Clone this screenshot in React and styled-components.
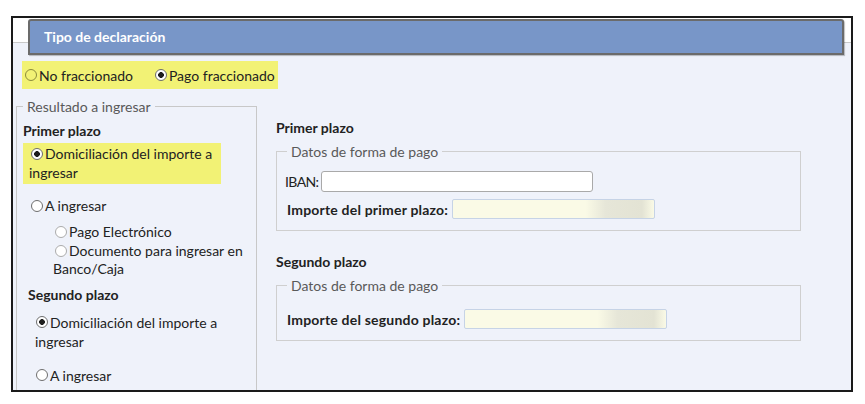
import React from "react";
import styled, { createGlobalStyle } from "styled-components";

const GlobalStyle = createGlobalStyle`
  html, body {
    margin: 0;
    padding: 0;
    background: #ffffff;
  }
  body {
    font-family: "Source Sans Pro", Lato, "Noto Sans", sans-serif;
    font-size: 14px;
    color: #222;
  }
`;

function Radio({ checked, muted, yellow }) {
  return <Dot checked={checked} muted={muted} yellow={yellow} />;
}

function App() {
  return (
    <>
      <GlobalStyle />
      <Frame>
        <Header>Tipo de declaración</Header>

        <ModeBar>
          <Option>
            <Radio yellow />
            No fraccionado
          </Option>
          <Option gap={22}>
            <Radio checked />
            Pago fraccionado
          </Option>
        </ModeBar>

        <Body>
          <LeftSet>
            <Legend indent={6}>Resultado a ingresar</Legend>
            <Title indent={6}>Primer plazo</Title>
            <Highlight>
              <Line indent={8}>
                <Radio checked />
                Domiciliación del importe a
              </Line>
              <Line indent={6}>ingresar</Line>
            </Highlight>
            <Line indent={14} top={12}>
              <Radio />A ingresar
            </Line>
            <SubOptions>
              <Line indent={2}>
                <Radio muted />
                Pago Electrónico
              </Line>
              <Line indent={2}>
                <Radio muted />
                Documento para ingresar en
              </Line>
              <Line>Banco/Caja</Line>
            </SubOptions>
            <Title indent={11} top={6}>
              Segundo plazo
            </Title>
            <Line indent={19} top={9}>
              <Radio checked />
              Domiciliación del importe a
            </Line>
            <Line indent={18}>ingresar</Line>
            <Line indent={19} top={15}>
              <Radio />A ingresar
            </Line>
          </LeftSet>

          <RightCol>
            <Title>Primer plazo</Title>
            <DataSet>
              <Legend indent={2}>Datos de forma de pago</Legend>
              <Row top={10}>
                <Label tight>IBAN:</Label>
                <TextInput width={272} />
              </Row>
              <Row top={7} indent={2}>
                <Label bold>Importe del primer plazo:</Label>
                <AmountInput />
              </Row>
            </DataSet>

            <Title top={21}>Segundo plazo</Title>
            <DataSet>
              <Legend indent={2}>Datos de forma de pago</Legend>
              <Row top={14} indent={2}>
                <Label bold>Importe del segundo plazo:</Label>
                <AmountInput />
              </Row>
            </DataSet>
          </RightCol>
        </Body>
      </Frame>
    </>
  );
}

const Frame = styled.div`
  margin: 16px 0 0 11px;
  width: 838px;
  height: 372px;
  border: 2px solid #1a1a1a;
  overflow: hidden;
  background: linear-gradient(
    to bottom,
    #ffffff 0 24px,
    #c9c9c9 24px 25px,
    #eff2fa 25px
  );
`;

const Header = styled.div`
  margin: 1px 7px 0 15px;
  height: 31px;
  display: flex;
  align-items: center;
  padding-left: 14px;
  background: #7896c8;
  border: 2px solid #6b6b6b;
  border-radius: 3px 3px 0 0;
  box-shadow: 1px 1px 1px rgba(0, 0, 0, 0.25);
  color: #ffffff;
  font-weight: 700;
  font-size: 14px;
  padding-bottom: 1px;
`;

const ModeBar = styled.div`
  margin: 6px 0 0 9px;
  width: 256px;
  height: 28px;
  display: flex;
  align-items: center;
  padding-left: 3px;
  box-sizing: border-box;
  background: #f2f275;
`;

const Option = styled.label`
  display: flex;
  align-items: center;
  margin-left: ${(p) => p.gap || 0}px;
  line-height: 19px;
`;

const Dot = styled.span`
  display: inline-block;
  box-sizing: border-box;
  width: 12px;
  height: 12px;
  margin-right: 2px;
  border-radius: 50%;
  flex-shrink: 0;
  border: 1px solid
    ${(p) => (p.yellow ? "#8c8c3c" : p.muted ? "#ababab" : "#6e6e6e")};
  background: ${(p) =>
    p.checked
      ? "radial-gradient(circle, #1e1e1e 0 2.6px, #ffffff 3.1px)"
      : p.yellow
      ? "transparent"
      : "#ffffff"};
`;

const Body = styled.div`
  display: flex;
  align-items: flex-start;
  margin-top: 8px;
`;

const LeftSet = styled.fieldset`
  margin: 0 0 0 3px;
  padding: 0 0 40px 0;
  width: 241px;
  box-sizing: border-box;
  border: 1px solid #c8c8c8;
  min-width: 0;
`;

const Legend = styled.legend`
  margin-left: ${(p) => p.indent || 0}px;
  padding: 0 4px;
  color: #595959;
  line-height: 19px;
`;

const Title = styled.div`
  font-weight: 700;
  line-height: 19px;
  margin: ${(p) => p.top || 5}px 0 0 ${(p) => p.indent || 0}px;
`;

const Highlight = styled.div`
  margin: 3px 0 0 6px;
  width: 198px;
  padding: 1px 0 2px;
  background: #f2f275;
`;

const Line = styled.div`
  display: flex;
  align-items: center;
  line-height: 19px;
  white-space: nowrap;
  margin: ${(p) => p.top || 0}px 0 0 ${(p) => p.indent || 0}px;
`;

const SubOptions = styled.div`
  margin: 8px 0 0 36px;

  & > div {
    line-height: 18.5px;
  }
`;

const RightCol = styled.div`
  margin: 16px 0 0 19px;
  width: 525px;
`;

const DataSet = styled.fieldset`
  margin: 5px 0 0 0;
  padding: 0 8px 11px;
  border: 1px solid #cfcfcf;
  min-width: 0;
`;

const Row = styled.div`
  display: flex;
  align-items: center;
  margin: ${(p) => p.top || 0}px 0 0 ${(p) => p.indent || 0}px;
`;

const Label = styled.span`
  font-weight: ${(p) => (p.bold ? 700 : 400)};
  letter-spacing: ${(p) => (p.bold ? "0.2px" : p.tight ? "-0.6px" : "0")};
  margin-right: ${(p) => (p.tight ? 2 : 4)}px;
  white-space: nowrap;
`;

const TextInput = styled.div`
  width: ${(p) => p.width}px;
  height: 21px;
  box-sizing: border-box;
  background: #ffffff;
  border: 1px solid #a9a9a9;
  border-radius: 3px;
`;

const AmountInput = styled.div`
  width: 203px;
  height: 20px;
  box-sizing: border-box;
  border: 1px solid #c6d3e6;
  border-radius: 2px;
  background: linear-gradient(
      to right,
      transparent 66%,
      #e6e6d8 76%,
      #e3e3d4 94%,
      transparent 100%
    ),
    #fafae6;
`;

export default App;
